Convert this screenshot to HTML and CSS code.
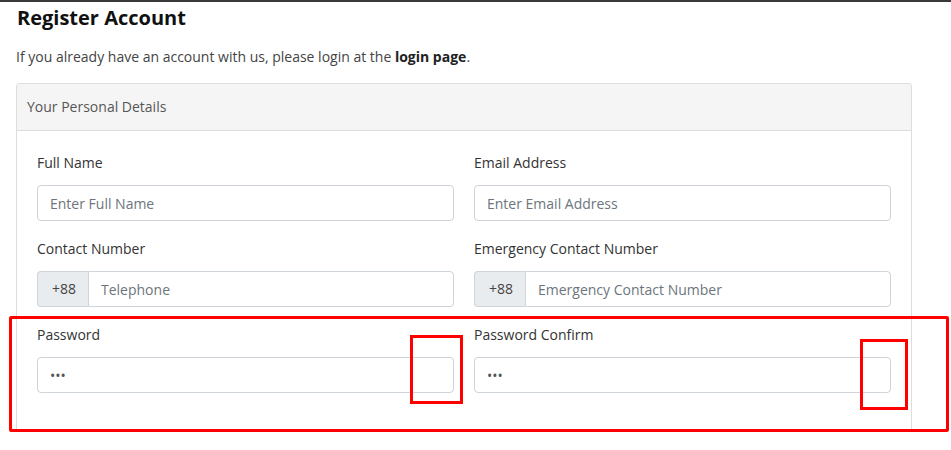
FILE: index.html
```html
<!DOCTYPE html>
<html lang="en">
<head>
<meta charset="utf-8">
<title>Register Account</title>
<link rel="stylesheet" href="styles.css">
</head>
<body>
<div class="topbar"></div>
<main class="page">
  <h1 class="title">Register Account</h1>
  <p class="intro">If you already have an account with us, please login at the <a href="#" class="login-link">login page</a>.</p>
  <section class="panel">
    <div class="panel-heading">Your Personal Details</div>
    <div class="panel-body">
      <div class="grid">
        <div class="field">
          <label class="label">Full Name</label>
          <input class="control" type="text" placeholder="Enter Full Name">
        </div>
        <div class="field">
          <label class="label">Email Address</label>
          <input class="control" type="text" placeholder="Enter Email Address">
        </div>
        <div class="field">
          <label class="label">Contact Number</label>
          <div class="input-group">
            <span class="addon">+88</span>
            <input class="control grouped" type="text" placeholder="Telephone">
          </div>
        </div>
        <div class="field">
          <label class="label">Emergency Contact Number</label>
          <div class="input-group">
            <span class="addon">+88</span>
            <input class="control grouped" type="text" placeholder="Emergency Contact Number">
          </div>
        </div>
        <div class="field">
          <label class="label">Password</label>
          <input class="control" type="password" value="abc">
        </div>
        <div class="field">
          <label class="label">Password Confirm</label>
          <input class="control" type="password" value="abc">
        </div>
      </div>
    </div>
  </section>
</main>
<div class="mark mark-row"></div>
<div class="mark mark-a"></div>
<div class="mark mark-b"></div>
</body>
</html>
```
FILE: styles.css
```css
* { box-sizing: border-box; }
html, body { margin: 0; padding: 0; background: #fff; }
body {
  font-family: "Open Sans", "Noto Sans", sans-serif;
  font-size: 14px;
  color: #333;
  position: relative;
  height: 450px;
  overflow: hidden;
}
.topbar { height: 2px; background: #3a3a3a; }
.page { padding: 0 39px 0 16px; }
.title {
  margin: 2px 0 0 1px;
  font-size: 20px;
  font-weight: 700;
  line-height: 28px;
  color: #111;
}
.intro {
  margin: 13px 0 0 0;
  line-height: 24px;
  color: #444;
}
.login-link { color: #222; font-weight: 700; text-decoration: none; }
.panel {
  margin-top: 14px;
  border: 1px solid #ddd;
  border-bottom: none;
  border-radius: 4px 4px 0 0;
  height: 348px;
}
.panel-heading {
  background: #f5f5f5;
  border-bottom: 1px solid #ddd;
  height: 47px;
  padding: 0 10px;
  line-height: 45px;
  color: #555;
  border-radius: 3px 3px 0 0;
}
.panel-body { padding: 22px 20px 0 20px; }
.grid {
  display: grid;
  grid-template-columns: 1fr 1fr;
  column-gap: 20px;
  row-gap: 18px;
}
.field { display: flex; flex-direction: column; }
.label {
  line-height: 20px;
  margin-bottom: 12px;
  color: #333;
}
.control {
  height: 36px;
  width: 100%;
  border: 1px solid #ced4da;
  border-radius: 4px;
  padding: 0 12px;
  font-family: inherit;
  font-size: 14px;
  color: #555;
  background: #fff;
  outline: none;
}
.control::placeholder { color: #6c757d; }
.input-group { display: flex; }
.addon {
  width: 51px;
  flex: none;
  height: 36px;
  line-height: 34px;
  background: #e9ecef;
  border: 1px solid #ced4da;
  border-right: none;
  border-radius: 4px 0 0 4px;
  padding-left: 14px;
  color: #444;
}
.grouped { border-radius: 0 4px 4px 0; }
.mark {
  position: absolute;
  border: 3px solid #ff0000;
}
.mark-row { left: 9px; top: 316px; width: 940px; height: 116px; border-radius: 2px; }
.mark-a { left: 410px; top: 335px; width: 53px; height: 69px; }
.mark-b { left: 860px; top: 339px; width: 48px; height: 71px; }
```
